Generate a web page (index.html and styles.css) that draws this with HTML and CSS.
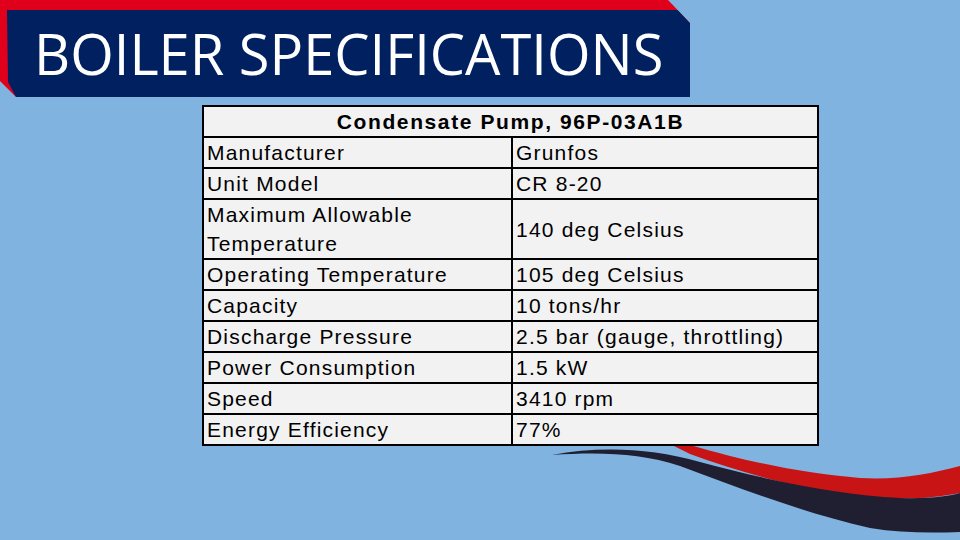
FILE: index.html
```html
<!DOCTYPE html>
<html lang="en">
<head>
    <meta charset="UTF-8">
    <meta name="viewport" content="width=device-width, initial-scale=1.0">
    <title>Boiler Specifications</title>
    <link rel="stylesheet" href="styles.css">
</head>
<body>
    <div class="slide">
        <svg class="wave" width="960" height="540" viewBox="0 0 960 540">
            <path fill="#c81414" d="M630,424 C690,448 780,472 860,478 C900,480 930,474 960,466 L960,493 C930,499 900,500 860,496 C800,490 740,472 690,454 Z"/>
            <path fill="#1f1f31" d="M552,455 C600,446 650,448 700,462 C770,481 840,495 900,498 C930,499 950,496 960,493 L960,532 C930,533 900,533 870,528 C800,512 740,488 680,466 C640,453 600,452 552,455 Z"/>
        </svg>

        <div class="banner">
            <h1 class="title">BOILER SPECIFICATIONS</h1>
        </div>

        <table class="specs">
            <tr>
                <th colspan="2">Condensate Pump, 96P-03A1B</th>
            </tr>
            <tr><td class="label">Manufacturer</td><td>Grunfos</td></tr>
            <tr><td class="label">Unit Model</td><td>CR 8-20</td></tr>
            <tr><td class="label">Maximum Allowable<br>Temperature</td><td>140 deg Celsius</td></tr>
            <tr><td class="label">Operating Temperature</td><td>105 deg Celsius</td></tr>
            <tr><td class="label">Capacity</td><td>10 tons/hr</td></tr>
            <tr><td class="label">Discharge Pressure</td><td>2.5 bar (gauge, throttling)</td></tr>
            <tr><td class="label">Power Consumption</td><td>1.5 kW</td></tr>
            <tr><td class="label">Speed</td><td>3410 rpm</td></tr>
            <tr><td class="label">Energy Efficiency</td><td>77%</td></tr>
        </table>
    </div>
</body>
</html>
```

FILE: styles.css
```css
body {
    margin: 0;
    padding: 0;
    background-color: #80b3df;
}

.slide {
    position: relative;
    width: 960px;
    height: 540px;
    overflow: hidden;
    background-color: #80b3df;
}

.wave {
    position: absolute;
    left: 0;
    top: 0;
}

/* red frame behind the navy title box */
.banner {
    position: relative;
    width: 690px;
    height: 97px;
    padding: 10px 0 0 7px;
    box-sizing: border-box;
    background-color: #e0001b;
    clip-path: polygon(0 0, 668px 0, 690px 23px, 690px 97px, 16px 97px, 0 81px);
}

.title {
    margin: 0;
    height: 87px;
    padding-left: 27px;
    background-color: #002060;
    clip-path: polygon(0 0, 671px 0, 683px 13px, 683px 87px, 9px 87px, 1px 72px);
    color: #ffffff;
    font-family: "Open Sans", "Noto Sans", sans-serif;
    font-weight: 400;
    font-size: 56px;
    line-height: 86px;
    white-space: nowrap;
}

.specs {
    position: relative;
    margin: 8px 0 0 202px;
    width: 617px;
    border-collapse: collapse;
    border: 2px solid #000000;
    background-color: #f2f2f2;
    font-family: "Liberation Sans", Arial, sans-serif;
    font-size: 21px;
    letter-spacing: 1.2px;
    color: #000000;
}

.specs th,
.specs td {
    border: 2px solid #000000;
    padding: 0 3px;
    line-height: 29px;
    text-align: left;
    vertical-align: middle;
    white-space: nowrap;
}

.specs th {
    text-align: center;
    font-weight: bold;
    letter-spacing: 1.6px;
}

.specs .label {
    width: 301px;
}
```
